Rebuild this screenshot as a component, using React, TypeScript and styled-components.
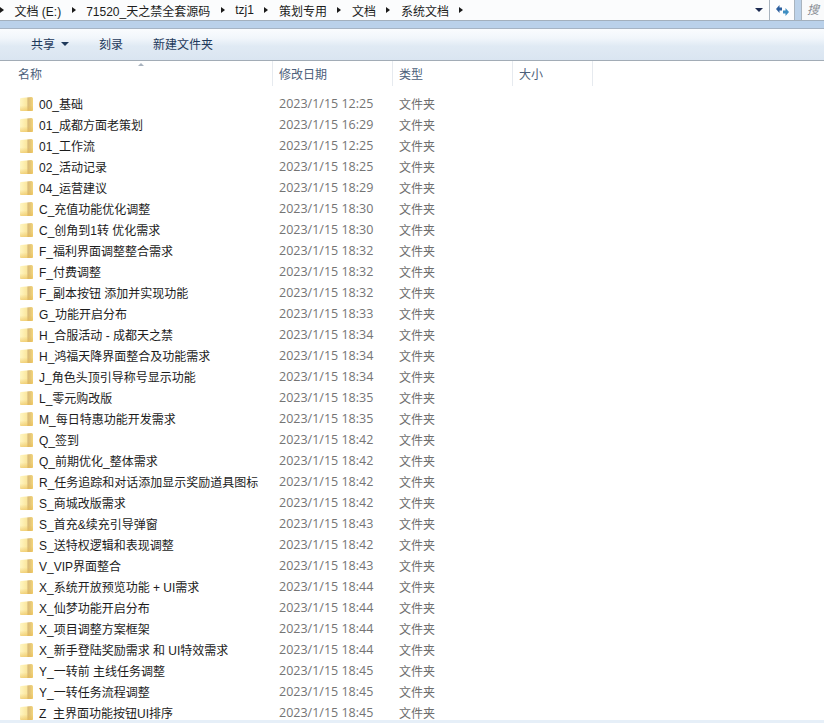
import React from 'react';
import styled, { createGlobalStyle } from 'styled-components';

const GlobalStyle = createGlobalStyle`
  html, body {
    margin: 0;
    padding: 0;
    height: 100%;
    overflow: hidden;
    background: #fff;
  }
`;

const Window = styled.div`
  width: 824px;
  height: 723px;
  display: flex;
  flex-direction: column;
  overflow: hidden;
  font-family: 'Liberation Sans', 'Noto Sans CJK SC', sans-serif;
  font-size: 12px;
  background: #fff;
`;

const AddressRow = styled.div`
  height: 21px;
  flex: none;
  box-sizing: border-box;
  display: flex;
  align-items: stretch;
  background: #fbfcfd;
  border-bottom: 1px solid #a3b0bd;
`;

const Crumbs = styled.div`
  flex: 1;
  display: flex;
  align-items: center;
  gap: 10.5px;
  color: #1c1c1c;
  white-space: nowrap;
`;

const Arrow = styled.span`
  width: 0;
  height: 0;
  border-top: 3.5px solid transparent;
  border-bottom: 3.5px solid transparent;
  border-left: 4px solid #1a1a1a;
`;

const DropArrow = styled.span`
  align-self: center;
  width: 0;
  height: 0;
  margin-right: 6px;
  border-left: 4px solid transparent;
  border-right: 4px solid transparent;
  border-top: 4px solid #1c2a50;
`;

const RefreshButton = styled.div`
  width: 26px;
  box-sizing: border-box;
  display: flex;
  align-items: center;
  justify-content: center;
  background: #fdfdfe;
  border-left: 1px solid #a9b4bf;
  border-right: 1px solid #a9b4bf;
`;

const Gripper = styled.div`
  width: 6px;
  background: #bcd2ea;
`;

const SearchBox = styled.div`
  flex: none;
  width: 23px;
  box-sizing: border-box;
  padding-left: 5px;
  overflow: hidden;
  background: #f9fafb;
  border-left: 1px solid #a9b4bf;
  color: #8a8f96;
  font-style: italic;
  line-height: 20px;
`;

const BlueBand = styled.div`
  height: 7px;
  flex: none;
  background: #bad1ea;
  border-bottom: 1px solid #a6b4c4;
`;

const Toolbar = styled.div`
  height: 32px;
  flex: none;
  display: flex;
  align-items: center;
  padding: 0 0 2px 31px;
  box-sizing: border-box;
  background: linear-gradient(#fafcfe 0%, #f1f6fb 30%, #e0eaf4 55%, #dae5f1 100%);
  border-bottom: 1px solid #a2acb6;
`;

const ToolButton = styled.span<{ $width: number }>`
  width: ${({ $width }) => $width}px;
  display: flex;
  align-items: center;
  gap: 6px;
  color: #1e395b;
`;

const MenuCaret = styled.span`
  width: 0;
  height: 0;
  border-left: 4px solid transparent;
  border-right: 4px solid transparent;
  border-top: 4px solid #1e395b;
`;

const ColumnHeader = styled.div`
  position: relative;
  flex: none;
  height: 24px;
  display: grid;
  grid-template-columns: 273px 120px 120px 80px;
  background: #fff;
`;

const HeaderCell = styled.div<{ $inset: number }>`
  padding: 6px 0 0 ${({ $inset }) => $inset}px;
  height: 19px;
  color: #4c607a;
  line-height: 16px;
  border-right: 1px solid #e6eaef;
`;

const SortMark = styled.span`
  position: absolute;
  left: 138px;
  top: 2px;
  width: 0;
  height: 0;
  border-left: 3.5px solid transparent;
  border-right: 3.5px solid transparent;
  border-bottom: 3.5px solid #a9b3bf;
`;

const List = styled.div`
  flex: 1;
  padding-top: 8px;
  min-height: 0;
  overflow: hidden;
`;

const Row = styled.div`
  height: 21px;
  display: grid;
  grid-template-columns: 279px 120px 1fr;
  align-items: center;
  white-space: nowrap;
`;

const NameCell = styled.div`
  display: flex;
  align-items: center;
  gap: 5px;
  padding-left: 19px;
  color: #1c1c1c;
`;

const DateCell = styled.div`
  color: #747474;
  font-family: 'Open Sans', 'Liberation Sans', sans-serif;
  font-size: 12.5px;
`;

const TypeCell = styled.div`
  color: #6d6d6d;
`;

const BottomEdge = styled.div`
  flex: none;
  height: 3px;
  background: #e6eff8;
`;

const FolderGradient = () => (
  <svg width="0" height="0" style={{ position: 'absolute' }}>
    <defs>
      <linearGradient id="folderFace" x1="0" y1="0" x2="1" y2="0">
        <stop offset="0" stopColor="#fff6c4" />
        <stop offset="0.5" stopColor="#fbe8a0" />
        <stop offset="0.62" stopColor="#d8bb7c" />
        <stop offset="0.78" stopColor="#e3c476" />
        <stop offset="1" stopColor="#f4d67c" />
      </linearGradient>
      <linearGradient id="folderShade" x1="0" y1="0" x2="0" y2="1">
        <stop offset="0.6" stopColor="#e8b94e" stopOpacity="0" />
        <stop offset="1" stopColor="#e8b94e" stopOpacity="0.55" />
      </linearGradient>
    </defs>
  </svg>
);

const FolderIcon = () => (
  <svg width="15" height="16" viewBox="0 0 15 16">
    <path d="M1 3 Q1 2 2 2 L12.5 1 Q14 1 14 2.5 L14 14 Q14 15 13 15 L2 15 Q1 15 1 14 Z" fill="url(#folderFace)" />
    <path d="M1 3 Q1 2 2 2 L12.5 1 Q14 1 14 2.5 L14 14 Q14 15 13 15 L2 15 Q1 15 1 14 Z" fill="url(#folderShade)" />
  </svg>
);

const RefreshIcon = () => (
  <svg width="15" height="13" viewBox="0 0 15 13">
    <path d="M1 5 L4.5 1 L4.5 3.5 L7 3.5 L7 6.5 L4.5 6.5 L4.5 9 Z" fill="#2d5f9e" />
    <path d="M14 8 L10.5 4 L10.5 6.5 L8 6.5 L8 9.5 L10.5 9.5 L10.5 12 Z" fill="#3f8ec2" />
  </svg>
);

const crumbs = ['文档 (E:)', '71520_天之禁全套源码', 'tzj1', '策划专用', '文档', '系统文档'];

const folders: [string, string][] = [
  ['00_基础', '12:25'],
  ['01_成都方面老策划', '16:29'],
  ['01_工作流', '12:25'],
  ['02_活动记录', '18:25'],
  ['04_运营建议', '18:29'],
  ['C_充值功能优化调整', '18:30'],
  ['C_创角到1转 优化需求', '18:30'],
  ['F_福利界面调整整合需求', '18:32'],
  ['F_付费调整', '18:32'],
  ['F_副本按钮 添加并实现功能', '18:32'],
  ['G_功能开启分布', '18:33'],
  ['H_合服活动 - 成都天之禁', '18:34'],
  ['H_鸿福天降界面整合及功能需求', '18:34'],
  ['J_角色头顶引导称号显示功能', '18:34'],
  ['L_零元购改版', '18:35'],
  ['M_每日特惠功能开发需求', '18:35'],
  ['Q_签到', '18:42'],
  ['Q_前期优化_整体需求', '18:42'],
  ['R_任务追踪和对话添加显示奖励道具图标', '18:42'],
  ['S_商城改版需求', '18:42'],
  ['S_首充&续充引导弹窗', '18:43'],
  ['S_送特权逻辑和表现调整', '18:42'],
  ['V_VIP界面整合', '18:43'],
  ['X_系统开放预览功能 + UI需求', '18:44'],
  ['X_仙梦功能开启分布', '18:44'],
  ['X_项目调整方案框架', '18:44'],
  ['X_新手登陆奖励需求 和 UI特效需求', '18:44'],
  ['Y_一转前 主线任务调整', '18:45'],
  ['Y_一转任务流程调整', '18:45'],
  ['Z_主界面功能按钮UI排序', '18:45'],
];

const App = () => (
  <Window>
    <GlobalStyle />
    <FolderGradient />
    <AddressRow>
      <Crumbs>
        <Arrow />
        {crumbs.map((crumb) => (
          <React.Fragment key={crumb}>
            <span>{crumb}</span>
            <Arrow />
          </React.Fragment>
        ))}
      </Crumbs>
      <DropArrow />
      <RefreshButton>
        <RefreshIcon />
      </RefreshButton>
      <Gripper />
      <SearchBox>搜</SearchBox>
    </AddressRow>
    <BlueBand />
    <Toolbar>
      <ToolButton $width={68}>
        共享 <MenuCaret />
      </ToolButton>
      <ToolButton $width={54}>刻录</ToolButton>
      <ToolButton $width={80}>新建文件夹</ToolButton>
    </Toolbar>
    <ColumnHeader>
      <HeaderCell $inset={18}>名称</HeaderCell>
      <SortMark />
      <HeaderCell $inset={6}>修改日期</HeaderCell>
      <HeaderCell $inset={6}>类型</HeaderCell>
      <HeaderCell $inset={6}>大小</HeaderCell>
    </ColumnHeader>
    <List>
      {folders.map(([name, time]) => (
        <Row key={name}>
          <NameCell>
            <FolderIcon />
            {name}
          </NameCell>
          <DateCell>2023/1/15 {time}</DateCell>
          <TypeCell>文件夹</TypeCell>
        </Row>
      ))}
    </List>
    <BottomEdge />
  </Window>
);

export default App;
